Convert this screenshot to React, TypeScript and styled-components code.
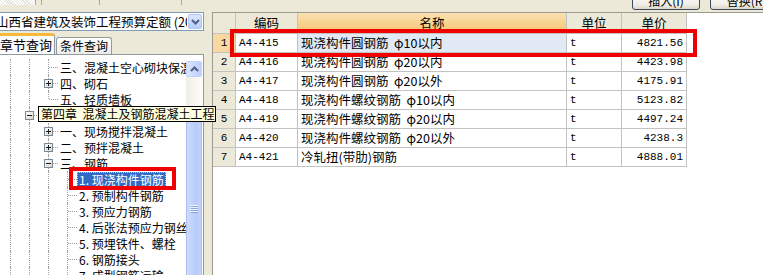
import styled, { createGlobalStyle } from "styled-components";

/*--------------------------
    Global
--------------------------*/
const GlobalReset = createGlobalStyle`
    html, body {
        margin: 0;
        padding: 0;
        background: #ece9d8;
        overflow: hidden;
    }
`;

const CJK = `"Noto Sans CJK SC", "Liberation Sans", sans-serif`;
const MONO = `"Liberation Mono", "Noto Sans CJK SC", monospace`;

/*--------------------------
    Styled
--------------------------*/
const Window = styled.div`
    position: relative;
    width: 763px;
    height: 275px;
    overflow: hidden;
    display: flex;
    flex-direction: column;
    background: #ece9d8;
    color: #000;
    font-family: ${CJK};
    font-size: 12px;
`;

const TopStrip = styled.div`
    height: 12px;
    flex: none;
    display: flex;
    justify-content: space-between;
    align-items: flex-start;
`;
const TopTabs = styled.div`
    display: flex;
    height: 5px;
`;
const TopTab = styled.div<{ $w: number; $hatched?: boolean }>`
    width: ${(p) => p.$w}px;
    height: 5px;
    box-sizing: border-box;
    border-right: 1px solid #aca899;
    background: ${(p) =>
        p.$hatched
            ? "repeating-linear-gradient(45deg, #ffffff 0 1px, #e4e2da 1px 2px)"
            : "transparent"};
`;
const TopButtons = styled.div`
    display: flex;
    gap: 10px;
    margin: -8px -20px 0 0;
`;
const XpButton = styled.div<{ $w: number }>`
    width: ${(p) => p.$w}px;
    height: 18px;
    box-sizing: border-box;
    border: 1px solid #3c4a5c;
    border-radius: 3px;
    background: linear-gradient(#ffffff, #f1efe7 70%, #dcd8c9);
    text-align: center;
    line-height: 16px;
    font-size: 12px;
`;

const Main = styled.div`
    flex: 1;
    min-height: 0;
    display: flex;
`;

/* left pane */
const LeftPane = styled.div`
    width: 208px;
    margin-left: -3px;
    flex: none;
    display: flex;
    flex-direction: column;
`;
const Combo = styled.div`
    height: 19px;
    box-sizing: border-box;
    margin-right: 1px;
    border: 1px solid #7f9db9;
    background: #fff;
    display: flex;
    align-items: stretch;
`;
const ComboText = styled.div`
    flex: 1;
    margin-left: -2px;
    line-height: 17px;
    font-size: 12.5px;
    white-space: nowrap;
    overflow: hidden;
`;
const ComboButton = styled.div`
    width: 14px;
    margin: 1px;
    border-radius: 2px;
    border: 1px solid #b1c5f3;
    box-sizing: border-box;
    background: linear-gradient(#dbe6fd, #b8cdf9);
    display: flex;
    align-items: center;
    justify-content: center;
`;
const TabRow = styled.div`
    height: 21px;
    margin-top: 2px;
    display: flex;
    align-items: flex-end;
`;
const Tab = styled.div<{ $active?: boolean; $w: number }>`
    width: ${(p) => p.$w}px;
    height: ${(p) => (p.$active ? 21 : 17)}px;
    box-sizing: border-box;
    border: 1px solid #919b9c;
    border-bottom: none;
    border-top: ${(p) => (p.$active ? "3px solid #f6b93a" : "1px solid #919b9c")};
    border-radius: 3px 3px 0 0;
    background: ${(p) => (p.$active ? "#fcfcfe" : "linear-gradient(#ffffff, #ecebe6)")};
    margin-left: ${(p) => (p.$active ? 0 : 1)}px;
    padding-left: ${(p) => (p.$active ? 2 : 3)}px;
    line-height: ${(p) => (p.$active ? 17 : 15)}px;
    font-size: ${(p) => (p.$active ? 13 : 12)}px;
    white-space: nowrap;
`;
const TreeBox = styled.div`
    flex: 1;
    min-height: 0;
    box-sizing: border-box;
    border: 1px solid #919b9c;
    border-bottom: none;
    margin-right: 1px;
    background: #fff;
    display: flex;
`;
const TreeList = styled.div`
    flex: 1;
    min-width: 0;
    padding: 4px 0 0 3px;
    overflow: hidden;
`;
const TreeRow = styled.div`
    height: 16px;
    display: flex;
    align-items: center;
`;
const Guide = styled.div<{ $line: boolean }>`
    position: relative;
    width: 19px;
    height: 16px;
    flex: none;

    &::before {
        content: "";
        display: ${(p) => (p.$line ? "block" : "none")};
        position: absolute;
        left: 9px;
        top: 0;
        bottom: 0;
        border-left: 1px dotted #a0a0a0;
    }
`;
const Joint = styled.div<{ $last?: boolean }>`
    position: relative;
    width: 19px;
    height: 16px;
    flex: none;
    display: flex;
    align-items: center;

    &::before {
        content: "";
        position: absolute;
        left: 9px;
        top: 0;
        height: ${(p) => (p.$last ? "8px" : "16px")};
        border-left: 1px dotted #a0a0a0;
    }
    &::after {
        content: "";
        position: absolute;
        left: 10px;
        right: 0;
        top: 8px;
        border-top: 1px dotted #a0a0a0;
    }
`;
const Toggle = styled.div`
    position: absolute;
    left: 5px;
    top: 4px;
    width: 9px;
    height: 9px;
    box-sizing: border-box;
    border: 1px solid #7a8a99;
    background: linear-gradient(135deg, #ffffff, #d8d4c6);
    z-index: 1;
    display: flex;
    align-items: center;
    justify-content: center;
`;
const TreeLabel = styled.div<{ $selected?: boolean; $covered?: boolean }>`
    height: 15px;
    box-sizing: border-box;
    padding: 0 2px;
    line-height: 15px;
    white-space: pre;
    visibility: ${(p) => (p.$covered ? "hidden" : "visible")};
    color: ${(p) => (p.$selected ? "#fff" : "#000")};
    background: ${(p) => (p.$selected ? "#316ac5" : "transparent")};
    outline: ${(p) => (p.$selected ? "1px dotted #f5c36a" : "none")};
    outline-offset: -1px;
`;

const ScrollBar = styled.div`
    width: 16px;
    flex: none;
    margin: 6px 1px 0 0;
    display: flex;
    flex-direction: column;
    background: linear-gradient(to right, #eeede5, #fdfdfa);
`;
const ScrollUp = styled.div`
    height: 16px;
    flex: none;
    box-sizing: border-box;
    border: 1px solid #c3d3fd;
    border-radius: 2px;
    background: linear-gradient(to right, #dbe6fd, #bccffa);
    display: flex;
    align-items: center;
    justify-content: center;
`;
const ScrollTrack = styled.div`
    height: 39px;
    flex: none;
`;
const ScrollThumb = styled.div`
    height: 186px;
    flex: none;
    box-sizing: border-box;
    border: 1px solid #a8bef3;
    border-radius: 2px;
    background: linear-gradient(to right, #cddbfd, #b8cbf9 70%, #c4d4fc);
    display: flex;
    align-items: center;
    justify-content: center;
`;

const Splitter = styled.div`
    width: 7px;
    flex: none;
`;

/* right pane */
const RightPane = styled.div`
    flex: 1;
    min-width: 0;
    box-sizing: border-box;
    border-top: 1px solid #9c9a8e;
    border-left: 1px solid #9c9a8e;
    background: #fff;
`;
const GridRow = styled.div<{ $head?: boolean }>`
    display: grid;
    grid-template-columns: 23px 62px 269px 55px 65px;
    height: ${(p) => (p.$head ? 21 : 19)}px;
`;
type CellKind = "num" | "numHot" | "head" | "headHot" | "plain" | "hilite";
const cellBg: Record<CellKind, string> = {
    num: "#ece9d8",
    numHot: "#f9d8a2",
    head: "#ece9d8",
    headHot: "linear-gradient(#fbe2b2, #f4c46f)",
    plain: "#fff",
    hilite: "#e1e9f5",
};
const Cell = styled.div<{ $kind: CellKind; $align?: "left" | "center" | "right"; $mono?: boolean }>`
    box-sizing: border-box;
    border-right: 1px solid #c2c2c2;
    border-bottom: 1px solid #c2c2c2;
    padding: 0 3px;
    background: ${(p) => cellBg[p.$kind]};
    text-align: ${(p) => p.$align || "left"};
    line-height: ${(p) => (p.$kind === "head" || p.$kind === "headHot" ? 20 : 18)}px;
    font-family: ${(p) => (p.$mono ? MONO : CJK)};
    font-size: ${(p) => (p.$mono ? 11 : 12.5)}px;
    white-space: pre;
    overflow: hidden;
`;

/* overlays */
const Tooltip = styled.div`
    position: absolute;
    left: 38px;
    top: 106px;
    width: 178px;
    height: 16px;
    box-sizing: border-box;
    border: 1px solid #000;
    background: #ffffe1;
    padding-left: 2px;
    line-height: 14px;
    font-size: 12px;
    white-space: pre;
    z-index: 3;
`;
const RedMark = styled.div`
    position: absolute;
    box-sizing: border-box;
    border: 4px solid #f00000;
    z-index: 4;
`;

/*--------------------------
    Data
--------------------------*/
type TreeItem = {
    guides: boolean[];
    last?: boolean;
    toggle?: "+" | "-";
    label: string;
    selected?: boolean;
    covered?: boolean;
};

const treeItems: TreeItem[] = [
    { guides: [true, true], label: "三、混凝土空心砌块保温墙" },
    { guides: [true, true], toggle: "+", label: "四、砌石" },
    { guides: [true, true], last: true, label: "五、轻质墙板" },
    { guides: [true], toggle: "-", label: "第四章  混凝土及钢筋混凝土工程", covered: true },
    { guides: [true, true], toggle: "+", label: "一、现场搅拌混凝土" },
    { guides: [true, true], toggle: "+", label: "二、预拌混凝土" },
    { guides: [true, true], toggle: "-", label: "三、钢筋" },
    { guides: [true, true, true], label: "1. 现浇构件钢筋", selected: true },
    { guides: [true, true, true], label: "2. 预制构件钢筋" },
    { guides: [true, true, true], label: "3. 预应力钢筋" },
    { guides: [true, true, true], label: "4. 后张法预应力钢丝" },
    { guides: [true, true, true], label: "5. 预埋铁件、螺栓" },
    { guides: [true, true, true], label: "6. 钢筋接头" },
    { guides: [true, true, true], label: "7. 成型钢筋运输" },
];

const quotaRows = [
    { code: "A4-415", name: "现浇构件圆钢筋  φ10以内", unit: "t", price: "4821.56" },
    { code: "A4-416", name: "现浇构件圆钢筋  φ20以内", unit: "t", price: "4423.98" },
    { code: "A4-417", name: "现浇构件圆钢筋  φ20以外", unit: "t", price: "4175.91" },
    { code: "A4-418", name: "现浇构件螺纹钢筋  φ10以内", unit: "t", price: "5123.82" },
    { code: "A4-419", name: "现浇构件螺纹钢筋  φ20以内", unit: "t", price: "4497.24" },
    { code: "A4-420", name: "现浇构件螺纹钢筋  φ20以外", unit: "t", price: "4238.3" },
    { code: "A4-421", name: "冷轧扭(带肋)钢筋", unit: "t", price: "4888.01" },
];

/*--------------------------
    Parts
--------------------------*/
const Chevron = ({ up }: { up?: boolean }) => (
    <svg width="9" height="6" viewBox="0 0 9 6">
        <path
            d={up ? "M1 5 L4.5 1.5 L8 5" : "M1 1 L4.5 4.5 L8 1"}
            fill="none"
            stroke="#4d6185"
            strokeWidth="2"
        />
    </svg>
);

const ToggleSign = ({ sign }: { sign: "+" | "-" }) => (
    <svg width="7" height="7" viewBox="0 0 7 7">
        <path d="M1 3.5 H6" stroke="#1a1a1a" strokeWidth="1" />
        {sign === "+" && <path d="M3.5 1 V6" stroke="#1a1a1a" strokeWidth="1" />}
    </svg>
);

const Grip = () => (
    <svg width="8" height="8" viewBox="0 0 8 8">
        {[0, 2, 4, 6].map((y) => (
            <path key={y} d={`M0 ${y + 0.5} H8`} stroke="#eef3fe" strokeWidth="1" />
        ))}
        {[1, 3, 5, 7].map((y) => (
            <path key={y} d={`M1 ${y + 0.5} H8`} stroke="#8ca5e0" strokeWidth="1" />
        ))}
    </svg>
);

/*--------------------------
    Main
--------------------------*/
const App = () => {
    return (
        <Window>
            <GlobalReset />

            <TopStrip>
                <TopTabs>
                    <TopTab $w={36} $hatched />
                    <TopTab $w={6} />
                    <TopTab $w={58} />
                    <TopTab $w={82} />
                </TopTabs>
                <TopButtons>
                    <XpButton $w={68}>插入(I)</XpButton>
                    <XpButton $w={73}>替换(R)</XpButton>
                </TopButtons>
            </TopStrip>

            <Main>
                <LeftPane>
                    <Combo>
                        <ComboText>山西省建筑及装饰工程预算定额 (2011)</ComboText>
                        <ComboButton>
                            <Chevron />
                        </ComboButton>
                    </Combo>

                    <TabRow>
                        <Tab $active $w={58}>
                            章节查询
                        </Tab>
                        <Tab $w={56}>条件查询</Tab>
                    </TabRow>

                    <TreeBox>
                        <TreeList>
                            {treeItems.map((item, i) => (
                                <TreeRow key={i}>
                                    {item.guides.map((g, j) => (
                                        <Guide key={j} $line={g} />
                                    ))}
                                    <Joint $last={item.last}>
                                        {item.toggle && (
                                            <Toggle>
                                                <ToggleSign sign={item.toggle} />
                                            </Toggle>
                                        )}
                                    </Joint>
                                    <TreeLabel $selected={item.selected} $covered={item.covered}>
                                        {item.label}
                                    </TreeLabel>
                                </TreeRow>
                            ))}
                        </TreeList>
                        <ScrollBar>
                            <ScrollUp>
                                <Chevron up />
                            </ScrollUp>
                            <ScrollTrack />
                            <ScrollThumb>
                                <Grip />
                            </ScrollThumb>
                        </ScrollBar>
                    </TreeBox>
                </LeftPane>

                <Splitter />

                <RightPane>
                    <GridRow $head>
                        <Cell $kind="head" />
                        <Cell $kind="head" $align="center">
                            编码
                        </Cell>
                        <Cell $kind="headHot" $align="center">
                            名称
                        </Cell>
                        <Cell $kind="head" $align="center">
                            单位
                        </Cell>
                        <Cell $kind="head" $align="center">
                            单价
                        </Cell>
                    </GridRow>
                    {quotaRows.map((row, i) => (
                        <GridRow key={row.code}>
                            <Cell $kind={i === 0 ? "numHot" : "num"} $align="center" $mono>
                                {i + 1}
                            </Cell>
                            <Cell $kind="plain" $mono>
                                {row.code}
                            </Cell>
                            <Cell $kind={i === 0 ? "hilite" : "plain"}>{row.name}</Cell>
                            <Cell $kind="plain" $mono>
                                {row.unit}
                            </Cell>
                            <Cell $kind="plain" $align="right" $mono>
                                {row.price}
                            </Cell>
                        </GridRow>
                    ))}
                </RightPane>
            </Main>

            <Tooltip>第四章  混凝土及钢筋混凝土工程</Tooltip>
            <RedMark style={{ left: 230, top: 29, width: 467, height: 28 }} />
            <RedMark style={{ left: 69, top: 167, width: 107, height: 23 }} />
        </Window>
    );
};

export default App;
